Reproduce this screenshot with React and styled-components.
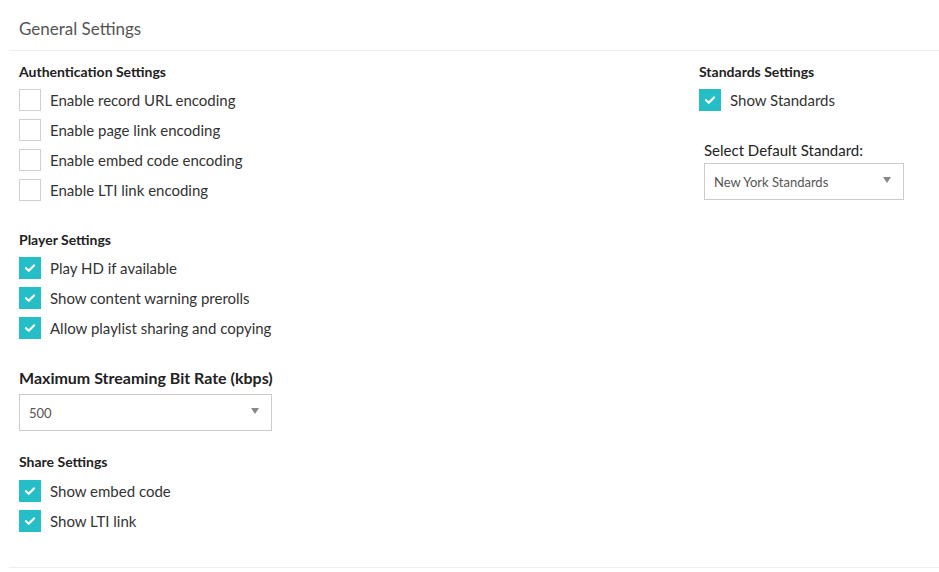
import React from "react";
import styled, { createGlobalStyle } from "styled-components";

const Global = createGlobalStyle`
  html, body { margin: 0; padding: 0; background: #fff; }
  body { font-family: Lato, "Open Sans", sans-serif; color: #333; }
`;

const Page = styled.div`
  width: 939px;
  height: 572px;
  padding-left: 9px;
  box-sizing: border-box;
  overflow: hidden;
`;

const Header = styled.div`
  height: 51px;
  border-bottom: 1px solid #eeeeee;
  padding-left: 10px;
  display: flex;
  align-items: center;
  padding-top: 7px;
  box-sizing: border-box;
  font-size: 17px;
  color: #555;
`;

const Body = styled.div`
  display: grid;
  grid-template-columns: 680px 1fr;
  padding: 12px 0 0 10px;
  height: 517px;
  box-sizing: border-box;
  border-bottom: 1px solid #eeeeee;
`;

const Column = styled.div`
  display: flex;
  flex-direction: column;
`;

const SectionTitle = styled.div`
  font-size: 14px;
  font-weight: 700;
  color: #222;
  height: 18px;
  line-height: 18px;
  margin-bottom: ${(p) => p.$space || 4}px;
`;

const Section = styled.div`
  display: flex;
  flex-direction: column;
  margin-bottom: ${(p) => p.$gap || 0}px;
`;

const Row = styled.label`
  display: flex;
  align-items: center;
  height: 30px;
  gap: 9px;
  font-size: 15px;
  color: #333;
`;

const Box = styled.span`
  width: 22px;
  height: 22px;
  box-sizing: border-box;
  display: flex;
  align-items: center;
  justify-content: center;
  background: ${(p) => (p.$checked ? "#26bec6" : "#fff")};
  border: ${(p) => (p.$checked ? "none" : "1px solid #d4cfcf")};
`;

const FieldLabel = styled.div`
  font-size: ${(p) => p.$size || 15}px;
  font-weight: ${(p) => p.$weight || 400};
  color: #222;
  line-height: 20px;
  margin-bottom: ${(p) => p.$space || 7}px;
  padding-left: ${(p) => p.$indent || 0}px;
`;

const Select = styled.div`
  width: ${(p) => p.$width}px;
  height: 37px;
  box-sizing: border-box;
  border: 1px solid #cccccc;
  margin-left: ${(p) => p.$indent || 0}px;
  display: flex;
  align-items: center;
  justify-content: space-between;
  padding: 0 12px 0 9px;
  font-size: 13px;
  color: #555;
`;

const Arrow = styled.span`
  width: 0;
  height: 0;
  border-left: 4px solid transparent;
  border-right: 4px solid transparent;
  border-top: 6px solid #888;
  margin-top: -4px;
`;

const Check = () => (
  <svg width="12" height="10" viewBox="0 0 12 10">
    <path d="M2 5.2 L4.8 7.8 L10 2.4" fill="none" stroke="#fff" strokeWidth="2.2" strokeLinecap="round" strokeLinejoin="round" />
  </svg>
);

const Option = ({ checked, children }) => (
  <Row>
    <Box $checked={checked}>{checked && <Check />}</Box>
    {children}
  </Row>
);

export default function App() {
  return (
    <>
      <Global />
      <Page>
        <Header>General Settings</Header>
        <Body>
          <Column>
            <Section $gap={26}>
              <SectionTitle>Authentication Settings</SectionTitle>
              <Option>Enable record URL encoding</Option>
              <Option>Enable page link encoding</Option>
              <Option>Enable embed code encoding</Option>
              <Option>Enable LTI link encoding</Option>
            </Section>
            <Section $gap={25}>
              <SectionTitle>Player Settings</SectionTitle>
              <Option checked>Play HD if available</Option>
              <Option checked>Show content warning prerolls</Option>
              <Option checked>Allow playlist sharing and copying</Option>
            </Section>
            <Section $gap={22}>
              <FieldLabel $size={16} $weight={700} $space={6}>
                Maximum Streaming Bit Rate (kbps)
              </FieldLabel>
              <Select $width={253}>
                500
                <Arrow />
              </Select>
            </Section>
            <Section>
              <SectionTitle $space={5}>Share Settings</SectionTitle>
              <Option checked>Show embed code</Option>
              <Option checked>Show LTI link</Option>
            </Section>
          </Column>
          <Column>
            <Section $gap={25}>
              <SectionTitle>Standards Settings</SectionTitle>
              <Option checked>Show Standards</Option>
            </Section>
            <FieldLabel $indent={5} $space={3}>Select Default Standard:</FieldLabel>
            <Select $width={200} $indent={5}>
              New York Standards
              <Arrow />
            </Select>
          </Column>
        </Body>
      </Page>
    </>
  );
}
